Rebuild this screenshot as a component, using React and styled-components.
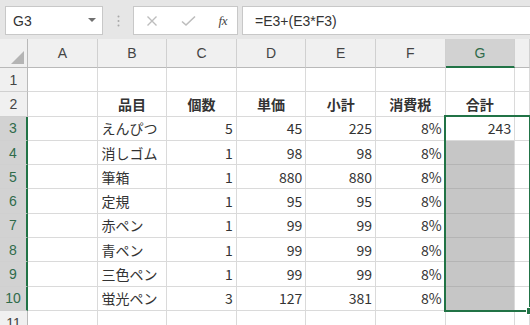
import React from "react";
import styled, { createGlobalStyle } from "styled-components";

const Global = createGlobalStyle`
  html, body { margin: 0; padding: 0; background: #ffffff; overflow: hidden; }
  body { width: 530px; height: 325px; font-family: "Noto Sans CJK JP", "Liberation Sans", sans-serif; }
`;

const GREEN = "#217346";
const GRID = "#dadada";

const Page = styled.div`
  width: 530px;
  height: 325px;
  display: flex;
  flex-direction: column;
  overflow: hidden;
`;

const Toolbar = styled.div`
  height: 39px;
  box-sizing: border-box;
  background: #e6e6e6;
  display: flex;
  align-items: flex-start;
  padding: 6px 0 0 5px;
  flex-shrink: 0;
`;

const Box = styled.div`
  height: 29px;
  box-sizing: border-box;
  background: #ffffff;
  border: 1px solid #c8c8c8;
  display: flex;
  align-items: center;
`;

const NameBox = styled(Box)`
  width: 98px;
  padding: 0 6px 0 7px;
  justify-content: space-between;
  font-family: "Liberation Sans", sans-serif;
  font-size: 14px;
  color: #333;
`;

const Caret = styled.span`
  width: 0;
  height: 0;
  border-left: 4px solid transparent;
  border-right: 4px solid transparent;
  border-top: 4px solid #707070;
  margin-top: -2px;
`;

const Dots = styled.div`
  width: 30px;
  height: 29px;
  display: flex;
  align-items: center;
  justify-content: center;
`;

const ButtonsBox = styled(Box)`
  width: 105px;
  padding: 0 8px 0 12px;
  justify-content: space-between;
`;

const FormulaBox = styled(Box)`
  flex: 1;
  margin-left: 4px;
  border-right: none;
  padding-left: 12px;
  font-family: "Liberation Sans", sans-serif;
  font-size: 14px;
  color: #333;
`;

const Fx = styled.span`
  font-family: "Liberation Serif", serif;
  font-style: italic;
  font-size: 13px;
  color: #444;
  letter-spacing: -0.5px;
  margin-right: 2px;
`;

const Sheet = styled.div`
  display: grid;
  grid-template-columns: 28px repeat(7, 69.6px) 1fr;
  grid-template-rows: 29px repeat(11, 24.3px);
  flex: 1;
  position: relative;
`;

const Corner = styled.div`
  background: #f0f0f0;
  border-right: 1px solid #b9b9b9;
  border-bottom: 1px solid #b9b9b9;
  box-sizing: border-box;
  position: relative;
`;

const CornerTri = styled.svg`
  position: absolute;
  right: 3px;
  bottom: 3px;
`;

const ColHead = styled.div`
  box-sizing: border-box;
  background: ${(p) => (p.$active ? "#d2d2d2" : "#f0f0f0")};
  border-right: 1px solid #d0d0d0;
  border-bottom: ${(p) => (p.$active ? `2px solid ${GREEN}` : "1px solid #b9b9b9")};
  display: flex;
  align-items: center;
  justify-content: center;
  font-family: "Liberation Sans", sans-serif;
  font-size: 14px;
  color: ${(p) => (p.$active ? "#2f6b4a" : "#444")};
  padding-top: ${(p) => (p.$active ? "1px" : "0")};
`;

const RowHead = styled.div`
  box-sizing: border-box;
  background: ${(p) => (p.$active ? "#d2d2d2" : "#f0f0f0")};
  border-bottom: 1px solid #d0d0d0;
  border-right: ${(p) => (p.$active ? `2px solid ${GREEN}` : "1px solid #b9b9b9")};
  display: flex;
  align-items: center;
  justify-content: center;
  font-family: "Liberation Sans", sans-serif;
  font-size: 14px;
  color: ${(p) => (p.$active ? "#2f6b4a" : "#444")};
`;

const Cell = styled.div`
  box-sizing: border-box;
  border-right: 1px solid ${GRID};
  border-bottom: 1px solid ${(p) => (p.$fill ? "#b4b4b4" : GRID)};
  background: ${(p) => (p.$fill ? "#c6c6c6" : "#fff")};
  display: flex;
  align-items: center;
  justify-content: ${(p) => (p.$align === "left" ? "flex-start" : p.$align === "center" ? "center" : "flex-end")};
  padding: ${(p) => (p.$align === "left" ? "0 0 0 4px" : p.$align === "center" ? "0" : "0 3px 0 0")};
  font-family: "Noto Sans CJK JP", "Liberation Sans", sans-serif;
  font-size: 14px;
  font-weight: ${(p) => (p.$bold ? 700 : 400)};
  color: #333;
  white-space: nowrap;
  overflow: hidden;
  line-height: 1;
`;

const Selection = styled.div`
  position: absolute;
  grid-column: 8;
  grid-row: 4 / 12;
  top: -2px;
  left: -2px;
  right: -1px;
  bottom: -1px;
  border: 2px solid ${GREEN};
  pointer-events: none;
  z-index: 2;
`;

const Handle = styled.div`
  position: absolute;
  right: -5px;
  bottom: -5px;
  width: 6px;
  height: 6px;
  background: ${GREEN};
  border: 1px solid #fff;
`;

const cols = ["A", "B", "C", "D", "E", "F", "G", ""];
const headers = ["品目", "個数", "単価", "小計", "消費税", "合計"];
const data = [
  ["えんぴつ", 5, 45, 225, "8%", 243],
  ["消しゴム", 1, 98, 98, "8%"],
  ["筆箱", 1, 880, 880, "8%"],
  ["定規", 1, 95, 95, "8%"],
  ["赤ペン", 1, 99, 99, "8%"],
  ["青ペン", 1, 99, 99, "8%"],
  ["三色ペン", 1, 99, 99, "8%"],
  ["蛍光ペン", 3, 127, 381, "8%"],
];

function rowCells(r) {
  const out = [];
  for (let c = 0; c < 8; c++) {
    let text = "";
    let align = "right";
    let bold = false;
    let fill = false;
    if (r === 2 && c >= 1 && c <= 6) {
      text = headers[c - 1];
      align = "center";
      bold = true;
    }
    if (r >= 3 && r <= 10) {
      const d = data[r - 3];
      if (c === 1) {
        text = d[0];
        align = "left";
      } else if (c >= 2 && c <= 5) {
        text = d[c - 1];
      } else if (c === 6) {
        text = d[5] !== undefined ? d[5] : "";
        fill = r > 3;
      }
    }
    out.push(
      <Cell key={`r${r}c${c}`} $align={align} $bold={bold} $fill={fill}>
        {text}
      </Cell>
    );
  }
  return out;
}

export default function App() {
  return (
    <Page>
      <Global />
      <Toolbar>
        <NameBox>
          <span>G3</span>
          <Caret />
        </NameBox>
        <Dots>
          <svg width="3" height="12" viewBox="0 0 3 12">
            <circle cx="1.5" cy="1.5" r="1" fill="#a8a8a8" />
            <circle cx="1.5" cy="6" r="1" fill="#a8a8a8" />
            <circle cx="1.5" cy="10.5" r="1" fill="#a8a8a8" />
          </svg>
        </Dots>
        <ButtonsBox>
          <svg width="12" height="12" viewBox="0 0 12 12">
            <path d="M1.5 1.5 L10.5 10.5 M10.5 1.5 L1.5 10.5" stroke="#bdbdbd" strokeWidth="1.4" fill="none" />
          </svg>
          <svg width="15" height="12" viewBox="0 0 15 12">
            <path d="M1 6.5 L5 10 L14 1.5" stroke="#bdbdbd" strokeWidth="1.6" fill="none" />
          </svg>
          <Fx>fx</Fx>
        </ButtonsBox>
        <FormulaBox>=E3+(E3*F3)</FormulaBox>
      </Toolbar>
      <Sheet>
        <Corner>
          <CornerTri width="13" height="13" viewBox="0 0 13 13">
            <polygon points="13,0 13,13 0,13" fill="#b4b4b4" />
          </CornerTri>
        </Corner>
        {cols.map((c, i) => (
          <ColHead key={"h" + i} $active={c === "G"}>
            {c}
          </ColHead>
        ))}
        {Array.from({ length: 11 }, (_, i) => i + 1).map((r) => (
          <React.Fragment key={"row" + r}>
            <RowHead $active={r >= 3 && r <= 10}>{r}</RowHead>
            {rowCells(r)}
          </React.Fragment>
        ))}
        <Selection>
          <Handle />
        </Selection>
      </Sheet>
    </Page>
  );
}
